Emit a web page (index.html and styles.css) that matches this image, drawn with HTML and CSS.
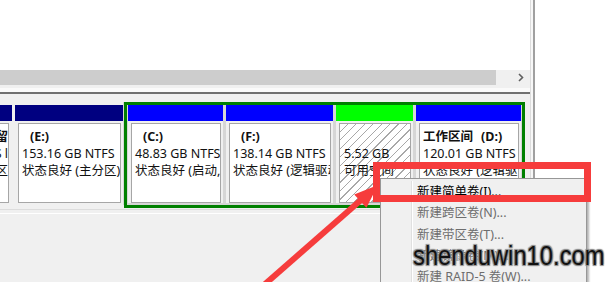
FILE: index.html
```html
<!DOCTYPE html>
<html lang="zh-CN">
<head>
  <meta charset="UTF-8" />
  <meta name="viewport" content="width=device-width, initial-scale=1.0"/>
  <title>磁盘管理</title>
  <link rel="stylesheet" href="styles.css">
</head>
<body>
  <div class="window">
    <div class="pane">
      <div class="volume-list"></div>

      <div class="hscroll">
        <div class="thumb"></div>
        <div class="scroll-btn">
          <svg width="6" height="9" viewBox="0 0 6 9">
            <polyline points="1,1 4.5,4.5 1,8" fill="none" stroke="#606060" stroke-width="1.6" />
          </svg>
        </div>
      </div>

      <div class="splitter"></div>

      <div class="disk-row">
        <div class="part plain part-cut">
          <div class="bar navy"></div>
          <div class="box cut-box">
            <div class="title">保留</div>
            <div>NTFS l</div>
            <div>主分区</div>
          </div>
        </div>

        <div class="part plain part-e">
          <div class="bar navy"></div>
          <div class="box">
            <div class="title"><span class="drive">(E:)</span></div>
            <div>153.16 GB NTFS</div>
            <div>状态良好 (主分区)</div>
          </div>
        </div>

        <div class="extended">
          <div class="part part-c">
            <div class="bar blue"></div>
            <div class="box">
              <div class="title"><span class="drive">(C:)</span></div>
              <div>48.83 GB NTFS</div>
              <div>状态良好 (启动,</div>
            </div>
          </div>
          <div class="part part-f">
            <div class="bar blue"></div>
            <div class="box">
              <div class="title"><span class="drive">(F:)</span></div>
              <div>138.14 GB NTFS</div>
              <div>状态良好 (逻辑驱动</div>
            </div>
          </div>
          <div class="part part-free">
            <div class="bar lime"></div>
            <div class="box hatched">
              <div class="title">&nbsp;</div>
              <div>5.52 GB</div>
              <div>可用空间</div>
            </div>
          </div>
          <div class="part part-d">
            <div class="bar blue"></div>
            <div class="box">
              <div class="title">工作区间<span class="drive">(D:)</span></div>
              <div>120.01 GB NTFS</div>
              <div>状态良好 (逻辑驱</div>
            </div>
          </div>
        </div>
      </div>

      <div class="disk-bottom"></div>
    </div>
    <div class="pane-edge"></div>
    <div class="side"></div>
  </div>

  <!-- right-click menu on the free space -->
  <div class="context-menu">
    <div class="menu-item active">新建简单卷(I)...</div>
    <div class="menu-item">新建跨区卷(N)...</div>
    <div class="menu-item">新建带区卷(T)...</div>
    <div class="menu-item">新建镜像卷(M)...</div>
    <div class="menu-item">新建 RAID-5 卷(W)...</div>
  </div>

  <!-- annotation -->
  <svg class="pointer" width="608" height="282" viewBox="0 0 608 282">
    <line x1="256" y1="292" x2="361" y2="200" stroke="#f63c3c" stroke-width="6" />
    <polygon points="378,185 366.4,207.8 354.2,194.6" fill="#f63c3c" />
  </svg>
  <div class="highlight-box"></div>

  <div class="watermark">shenduwin10.com</div>
</body>
</html>
```

FILE: styles.css
```css
body {
  margin: 0;
  width: 608px;
  height: 282px;
  overflow: hidden;
  position: relative;
  background-color: #f0f0f0;
  font-family: "Noto Sans", "Noto Sans CJK SC", sans-serif;
  font-size: 12.5px;
  color: #111;
}

.window {
  display: flex;
  height: 282px;
}

.pane {
  width: 530px;
  display: flex;
  flex-direction: column;
  background-color: #f0f0f0;
}

.pane-edge {
  width: 5px;
  background: linear-gradient(to right, #dcdcdc 0 1px, #f7f7f7 1px 3px, #a0a0a0 3px 5px);
}

.side {
  flex: 1;
  background-color: #fff;
}

.volume-list {
  height: 70px;
  background-color: #fff;
}

.hscroll {
  height: 15px;
  display: flex;
  background-color: #f0f0f0;
}

.hscroll .thumb {
  width: 496px;
  background-color: #cdcdcd;
}

.scroll-btn {
  flex: 1;
  display: flex;
  align-items: center;
  justify-content: flex-end;
  padding-right: 6px;
}

.splitter {
  height: 7px;
  background: linear-gradient(#f0f0f0 0 3px, #fafafa 3px);
  border-bottom: 2px solid #707070;
}

.disk-row {
  margin-top: 8px;
  height: 106px;
  display: flex;
  align-items: flex-start;
}

.part {
  display: flex;
  flex-direction: column;
  background-color: #f0f0f0;
}

.part.plain {
  padding-top: 3px;
  height: 103px;
  box-sizing: border-box;
}

.part-cut {
  width: 12px;
  overflow: hidden;
}

.part-e {
  width: 109px;
  margin-left: 3px;
  border-right: 1px solid #d6d6d6;
}

.extended {
  display: flex;
  gap: 3px;
  padding: 0 1px 2px;
  border: 3px solid #008000;
  background-color: #d6d6d6;
}

.extended .part {
  height: 98px;
}

.part-c { width: 95px; }
.part-f { width: 107px; }
.part-free { width: 77px; }
.part-d { width: 105px; }

.bar {
  height: 16px;
}

.navy { background-color: #000080; }
.blue { background-color: #0000ff; }
.lime { background-color: #00ff00; }

.box {
  margin: 2px 2px 0 3px;
  height: 80px;
  box-sizing: border-box;
  border: 1px solid #a6a6a6;
  background-color: #fff;
  padding: 4px 0 0 3px;
  line-height: 17px;
  white-space: nowrap;
  overflow: hidden;
}

.cut-box {
  margin-left: -40px;
  margin-right: 3px;
  display: flex;
  flex-direction: column;
  align-items: flex-end;
}

.hatched {
  padding-left: 4px;
  background: repeating-linear-gradient(135deg, #fff 0 5px, #a8a8a8 5px 6px);
}

.title {
  font-weight: bold;
}

.drive {
  margin-left: 8px;
}

.disk-bottom {
  margin-top: 1px;
  height: 3px;
  border-top: 1px solid #dcdcdc;
  border-bottom: 1px solid #fff;
}

.context-menu {
  position: absolute;
  left: 380px;
  top: 178px;
  width: 205px;
  height: 101px;
  padding-top: 2px;
  overflow: hidden;
  background-color: #f0f0f0;
  border: 1px solid #979797;
  border-bottom: none;
  box-shadow: 2px 2px 2px rgba(0, 0, 0, 0.3);
}

.context-menu::before {
  content: '';
  position: absolute;
  left: 30px;
  top: 2px;
  bottom: 0;
  width: 1px;
  background-color: #e0e0e0;
  border-right: 1px solid #fff;
}

.menu-item {
  height: 21.3px;
  line-height: 21.3px;
  padding-left: 36px;
  color: #6d6d6d;
}

.menu-item.active {
  color: #000;
}

.pointer {
  position: absolute;
  left: 0;
  top: 0;
}

.highlight-box {
  position: absolute;
  left: 373px;
  top: 162px;
  width: 218px;
  height: 40px;
  box-sizing: border-box;
  border: 7px solid #f63c3c;
}

.watermark {
  position: absolute;
  left: 413px;
  top: 243px;
  font-family: "Liberation Sans", sans-serif;
  font-size: 27px;
  line-height: 1;
  color: #111;
  transform: scaleX(0.88);
  transform-origin: left top;
  text-shadow: 1px 1px 1px #8a8a8a, -1px -1px 1px #8a8a8a, 1px -1px 1px #8a8a8a, -1px 1px 1px #8a8a8a;
}
```
